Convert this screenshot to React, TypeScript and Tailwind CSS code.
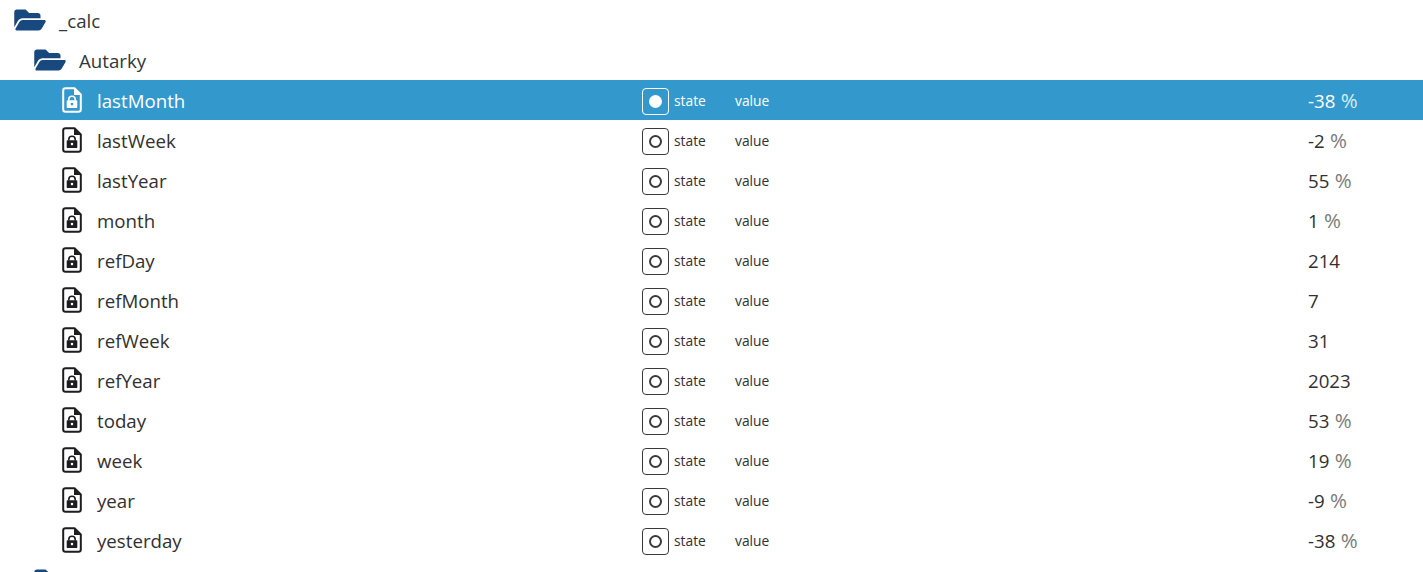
import { FaFolderOpen } from 'react-icons/fa';

const rows = [
  { name: 'lastMonth', value: '-38', unit: '%' },
  { name: 'lastWeek', value: '-2', unit: '%' },
  { name: 'lastYear', value: '55', unit: '%' },
  { name: 'month', value: '1', unit: '%' },
  { name: 'refDay', value: '214' },
  { name: 'refMonth', value: '7' },
  { name: 'refWeek', value: '31' },
  { name: 'refYear', value: '2023' },
  { name: 'today', value: '53', unit: '%' },
  { name: 'week', value: '19', unit: '%' },
  { name: 'year', value: '-9', unit: '%' },
  { name: 'yesterday', value: '-38', unit: '%' },
];

const FileLock = () => (
  <svg viewBox="0 0 20 26" className="h-[26px] w-5" fill="none">
    <path
      d="M3.5 1.2H12.5L18.8 7.5V22.5A2.3 2.3 0 0 1 16.5 24.8H3.5A2.3 2.3 0 0 1 1.2 22.5V3.5A2.3 2.3 0 0 1 3.5 1.2Z"
      stroke="currentColor"
      strokeWidth="2"
      strokeLinejoin="round"
    />
    <path d="M12 1.5V8H18.5" fill="currentColor" />
    <path d="M6.8 13.5V12.4A3.2 3.2 0 0 1 13.2 12.4V13.5" stroke="currentColor" strokeWidth="1.6" />
    <path
      d="M5.5 13.2H14.5A.8.8 0 0 1 15.3 14V20.2A.8.8 0 0 1 14.5 21H5.5A.8.8 0 0 1 4.7 20.2V14A.8.8 0 0 1 5.5 13.2ZM10 15.8A1.3 1.3 0 1 0 10 18.4A1.3 1.3 0 1 0 10 15.8Z"
      fill="currentColor"
      fillRule="evenodd"
    />
  </svg>
);

const FolderRow = ({ label, indent }: { label: string; indent: string }) => (
  <div className={`flex h-10 items-center ${indent}`}>
    <FaFolderOpen className="h-[28px] w-[32px] text-[#17497f]" />
    <span className="ml-[13px] pt-0.5 text-[18.7px] text-[#32373c]">{label}</span>
  </div>
);

export default function App() {
  return (
    <div className="h-[572px] overflow-hidden bg-white font-['Open_Sans','Noto_Sans',sans-serif]">
      <FolderRow label="_calc" indent="pl-[14px]" />
      <FolderRow label="Autarky" indent="pl-[34px]" />
      {rows.map((row, i) => (
        <div
          key={row.name}
          className={`flex h-10 items-center pl-[62px] ${i === 0 ? 'bg-[#3399cc] text-white' : 'text-[#32302f]'}`}
        >
          <span className={i === 0 ? 'text-white' : 'text-[#1d1d1f]'}>
            <FileLock />
          </span>
          <span className="ml-[15px] w-[545px] pt-0.5 text-[18.7px]">{row.name}</span>
          <span
            className={`mt-0.5 flex h-[27px] w-[27px] items-center justify-center rounded-[4px] border-[1.75px] ${
              i === 0 ? 'border-white' : 'border-[#3a3a3a]'
            }`}
          >
            <span
              className={`h-[13px] w-[13px] rounded-full ${
                i === 0 ? 'bg-white' : 'border-2 border-[#3a3a3a]'
              }`}
            />
          </span>
          <span className="ml-[5px] w-[61px] pt-0.5 text-[13.8px]">state</span>
          <span className="w-[573px] pt-0.5 text-[13.8px]">value</span>
          <span className="pt-0.5 text-[18.7px] leading-[28px]">
            {row.value}
            {row.unit && (
              <span className={`text-[20.5px] leading-none ${i === 0 ? 'text-[#d6ebf5]' : 'text-[#7a7a7a]'}`}> {row.unit}</span>
            )}
          </span>
        </div>
      ))}
      <FolderRow label="" indent="pl-[34px]" />
    </div>
  );
}
